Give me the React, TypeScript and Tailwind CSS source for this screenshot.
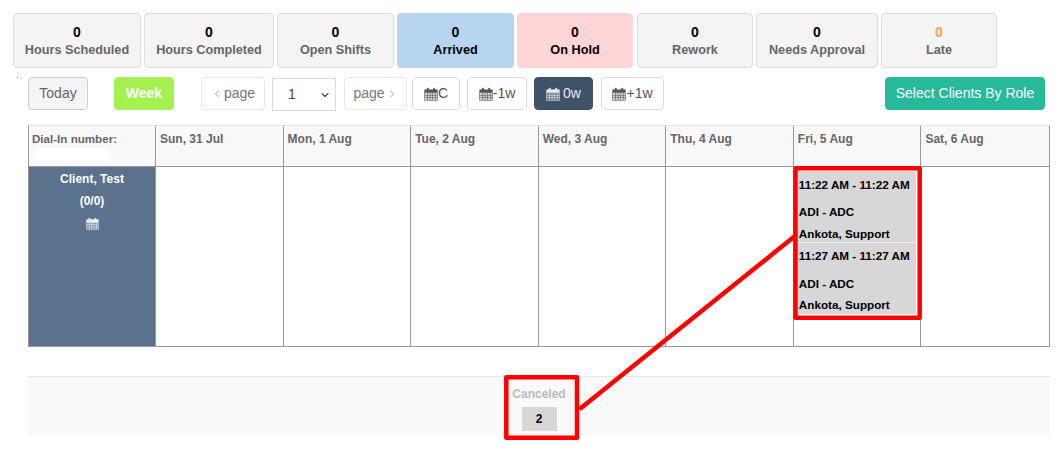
import { ChevronDown, ChevronLeft, ChevronRight } from 'lucide-react';

const stats = [
  { label: 'Hours Scheduled', w: 'w-[128px]', box: 'bg-[#f4f4f4] border-[#dddddd]', text: 'text-[#666666]', num: 'text-black' },
  { label: 'Hours Completed', w: 'w-[130px]', box: 'bg-[#f4f4f4] border-[#dddddd]', text: 'text-[#666666]', num: 'text-black' },
  { label: 'Open Shifts', w: 'w-[117px]', box: 'bg-[#f4f4f4] border-[#dddddd]', text: 'text-[#666666]', num: 'text-black' },
  { label: 'Arrived', w: 'w-[117px]', box: 'bg-[#b7d5ee] border-[#b7d5ee]', text: 'text-black', num: 'text-black' },
  { label: 'On Hold', w: 'w-[116px]', box: 'bg-[#ffd4d4] border-[#ffd4d4]', text: 'text-black', num: 'text-black' },
  { label: 'Rework', w: 'ml-[1px] w-[116px]', box: 'bg-[#f4f4f4] border-[#dddddd]', text: 'text-[#666666]', num: 'text-black' },
  { label: 'Needs Approval', w: 'w-[122px]', box: 'bg-[#f4f4f4] border-[#dddddd]', text: 'text-[#666666]', num: 'text-black' },
  { label: 'Late', w: 'w-[116px]', box: 'bg-[#f4f4f4] border-[#dddddd]', text: 'text-[#666666]', num: 'text-[#f5a742]' },
];

const days = ['Sun, 31 Jul', 'Mon, 1 Aug', 'Tue, 2 Aug', 'Wed, 3 Aug', 'Thu, 4 Aug', 'Fri, 5 Aug', 'Sat, 6 Aug'];

function CalendarIcon({ className }: { className?: string }) {
  return (
    <svg viewBox="0 0 14 14" className={className} fill="currentColor" aria-hidden="true">
      <path d="M1 2.500h12a.6.6 0 0 1 .6.6v9.800a.6.6 0 0 1-.6.6H1a.6.6 0 0 1-.6-.6V3.100a.6.6 0 0 1 .6-.6Z" fillOpacity="0.25" />
      <path d="M1 2.500h12a.6.6 0 0 1 .6.6V5.500H.4V3.100a.6.6 0 0 1 .6-.6Z" />
      <path d="M.4 5.500h13.200v.6H.4zM.4 8h13.200v.6H.4zM.4 10.500h13.200v.6H.4zM.4 12.900h13.200v.6H.4zM.4 5.500H1v8H.4zM3.100 5.500h.6v8h-.6zM5.700 5.500h.6v8h-.6zM8.300 5.500h.6v8h-.6zM10.900 5.500h.6v8h-.6zM13 5.500h.6v8H13z" />
      <rect x="2.900" y="0.800" width="1.800" height="3.200" rx="0.800" />
      <rect x="9.300" y="0.800" width="1.800" height="3.200" rx="0.800" />
    </svg>
  );
}

function ToolButton({ className, children }: { className: string; children: React.ReactNode }) {
  return (
    <div className={`flex h-[33px] shrink-0 items-center justify-center rounded-[4px] border text-[14px] ${className}`}>
      {children}
    </div>
  );
}

export default function App() {
  return (
    <div className="relative h-[450px] w-[1061px] overflow-hidden bg-white font-['Liberation_Sans',Arial,sans-serif]">
      {/* Stat tiles */}
      <div className="flex gap-[3px] pl-[13px] pt-[13px]">
        {stats.map((s) => (
          <div key={s.label} className={`flex h-[55px] shrink-0 flex-col items-center rounded-[4px] border pt-[9px] text-[12.700px] font-bold leading-[18px] ${s.w} ${s.box}`}>
            <span className={`text-[14px] ${s.num}`}>0</span>
            <span className={s.text}>{s.label}</span>
          </div>
        ))}
      </div>

      {/* Toolbar */}
      <div className="flex items-start pl-[28px] pr-[16px] pt-[9px]">
        <ToolButton className="w-[60px] border-[#cccccc] bg-[#f4f4f4] text-[#666666]">Today</ToolButton>
        <ToolButton className="ml-[26px] w-[60px] border-[#a5f152] bg-[#a5f152] font-bold text-white">Week</ToolButton>
        <ToolButton className="ml-[27px] w-[64px] border-[#e6e6e6] bg-white text-[#777777]">
          <ChevronLeft size={12} strokeWidth={1.5} />
          <span className="ml-[1px]">page</span>
        </ToolButton>
        <div className="ml-[7px] mt-[1px] flex h-[33px] w-[64px] shrink-0 items-center justify-between border border-[#d9d9d9] pl-[15px] pr-[4px] text-[14px] text-[#444444]">
          <span>1</span>
          <ChevronDown size={12} strokeWidth={2.200} />
        </div>
        <ToolButton className="ml-[8px] w-[63px] border-[#e6e6e6] bg-white text-[#777777]">
          <span className="mr-[1px]">page</span>
          <ChevronRight size={12} strokeWidth={1.500} />
        </ToolButton>
        <ToolButton className="ml-[5px] w-[48px] border-[#dddddd] bg-white text-[#555555]">
          <CalendarIcon className="h-[14px] w-[14px]" />C
        </ToolButton>
        <ToolButton className="ml-[7px] w-[60px] border-[#dddddd] bg-white text-[#555555]">
          <CalendarIcon className="h-[14px] w-[14px]" />-1w
        </ToolButton>
        <ToolButton className="ml-[7px] w-[59px] border-[#3f5368] bg-[#3f5368] text-[#e6ebf0]">
          <CalendarIcon className="mr-[3px] h-[14px] w-[14px]" />0w
        </ToolButton>
        <ToolButton className="ml-[8px] w-[63px] border-[#dddddd] bg-white text-[#555555]">
          <CalendarIcon className="h-[14px] w-[14px]" />+1w
        </ToolButton>
        <ToolButton className="ml-auto w-[160px] border-[#26b99a] bg-[#26b99a] text-[13.700px] text-white">Select Clients By Role</ToolButton>
      </div>

      {/* Week grid */}
      <div className="ml-[28px] mt-[14px] w-[1022px] border-b border-l border-r border-t border-b-[#999999] border-l-[#999999] border-r-[#999999] border-t-[#e6e6e6]">
        <div className="grid h-[41px] grid-cols-[127px_repeat(7,1fr)] border-b border-[#999999] bg-[#f9f9f9] text-[12px] font-bold text-[#666666]">
          <div className="border-r border-[#999999] pl-[3px] pt-[5px] text-[11.600px] leading-[16px]">
            Dial-In number:
            <div className="ml-[1px] mt-[1px] h-[12px] w-[78px] rounded-full bg-white blur-[1px]" />
          </div>
          {days.map((d, i) => (
            <div key={d} className={`pl-[4px] pt-[5px] leading-[16px] ${i < 6 ? 'border-r border-[#999999]' : ''}`}>
              {d}
            </div>
          ))}
        </div>
        <div className="grid h-[179px] grid-cols-[127px_repeat(7,1fr)]">
          <div className="flex flex-col items-center border-r border-[#999999] bg-[#5b728c] pt-[1px] text-[12px] font-bold leading-[22px] text-white">
            <span>Client, Test</span>
            <span>(0/0)</span>
            <CalendarIcon className="mt-[5px] h-[13px] w-[13px] text-[#e8edf2]" />
          </div>
          {days.map((d, i) => (
            <div key={d} className={`${i < 6 ? 'border-r border-[#999999]' : ''} ${i === 5 ? 'px-[4px] pt-[4px]' : ''}`}>
              {i === 5 && (
                <div className="text-[11.700px] font-bold text-black">
                  <div className="h-[71px] bg-[#d7d7d7] pl-[1px]">
                    <div className="pt-[3px] leading-[22px]">11:22 AM - 11:22 AM</div>
                    <div className="mt-[5px] leading-[22px]">ADI - ADC</div>
                    <div className="leading-[22px]">Ankota, Support</div>
                  </div>
                  <div className="h-[72px] border-t border-[#f2f2f2] bg-[#d7d7d7] pl-[1px]">
                    <div className="pt-[2px] leading-[22px]">11:27 AM - 11:27 AM</div>
                    <div className="mt-[6px] leading-[22px]">ADI - ADC</div>
                    <div className="mt-[-1px] leading-[22px]">Ankota, Support</div>
                  </div>
                </div>
              )}
            </div>
          ))}
        </div>
      </div>

      {/* Canceled band */}
      <div className="ml-[28px] mt-[29px] flex h-[59px] w-[1022px] flex-col items-center border-t border-[#e6e6e6] bg-[#f9f9f9] pt-[10px]">
        <span className="text-[12px] font-bold leading-[14px] text-[#bbbbbb]">Canceled</span>
        <div className="mt-[6px] flex h-[24px] w-[35px] items-center justify-center bg-[#d7d7d7] text-[12px] font-bold text-black">2</div>
      </div>

      {/* Annotation drawn over the screenshot */}
      <span className="absolute left-[17px] top-[77px] h-[1px] w-[1px] bg-[#3a8fb7]" />
      <svg className="pointer-events-none absolute left-0 top-0 h-[450px] w-[1061px]" viewBox="0 0 1061 450" fill="none" stroke="#ff0000" strokeWidth="4.500" strokeLinejoin="round">
        <rect x="795.500" y="168.300" width="124.200" height="149.500" />
        <rect x="506.300" y="377.300" width="70.700" height="60.500" />
        <path d="M581 408 795 236" strokeLinecap="round" />
      </svg>
    </div>
  );
}
